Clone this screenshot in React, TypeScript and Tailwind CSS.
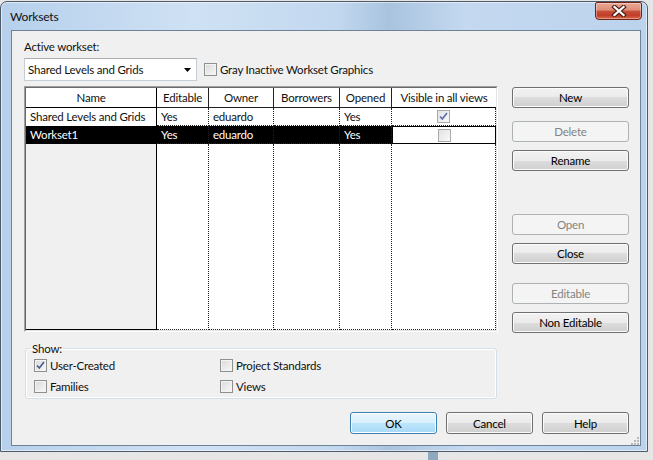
import React from "react";

// Revit-style "Worksets" dialog, Windows 7 Aero look

type BtnProps = { label: string; disabled?: boolean; primary?: boolean; wide?: boolean };

const Btn: React.FC<BtnProps> = ({ label, disabled, primary, wide }) => {
  const size = wide ? "w-[117px] h-[21px]" : "w-[87px] h-[22px]";
  let look =
    "border-[#707070] text-black bg-[linear-gradient(#f2f2f2_0%,#ebebeb_50%,#dddddd_50%,#cfcfcf_100%)] shadow-[inset_0_0_0_1px_#fbfbfb]";
  if (disabled) look = "border-[#adb2b5] text-[#838383] bg-[#f4f4f4]";
  if (primary)
    look =
      "border-[#3c7fb1] text-black bg-[linear-gradient(#eaf6fd_0%,#d9f0fc_50%,#bee6fd_50%,#a7d9f5_100%)] shadow-[inset_0_0_0_1px_#ffffff]";
  return (
    <div className={`${size} ${look} shrink-0 rounded-[3px] border flex items-center justify-center leading-[15px]`}>
      {label}
    </div>
  );
};

const Check: React.FC<{ checked?: boolean; dim?: boolean }> = ({ checked, dim }) => (
  <span
    className={`w-[13px] h-[13px] shrink-0 border flex items-center justify-center ${
      dim
        ? "border-[#a9a9a9] bg-[linear-gradient(135deg,#e2e2e2,#fafafa)]"
        : "border-[#8e8f8f] bg-[linear-gradient(135deg,#d9d9d9,#f9f9f9)] shadow-[inset_0_0_0_1px_#f4f4f4]"
    }`}
  >
    {checked && (
      <svg width="11" height="11" viewBox="0 0 11 11">
        <path d="M2 5.5 L4.3 8 L9 2" fill="none" stroke={dim ? "#5b6fa6" : "#4a5e93"} strokeWidth="1.7" />
      </svg>
    )}
  </span>
);

const cols = [
  { key: "Editable", w: "w-[52px]" },
  { key: "Owner", w: "w-[65px]" },
  { key: "Borrowers", w: "w-[66px]" },
  { key: "Opened", w: "w-[52px]" },
];

const rows = [
  { name: "Shared Levels and Grids", Editable: "Yes", Owner: "eduardo", Borrowers: "", Opened: "Yes", visible: true, sel: false },
  { name: "Workset1", Editable: "Yes", Owner: "eduardo", Borrowers: "", Opened: "Yes", visible: false, sel: true },
];

function Grid() {
  return (
    <div className="w-[474px] h-[246px] shrink-0 border border-t-[#a0a0a0] border-l-[#a0a0a0] border-r-white border-b-white">
      <div className="w-full h-full border border-t-[#696969] border-l-[#696969] border-r-[#e3e3e3] border-b-[#e3e3e3] flex">
        {/* row header column */}
        <div className="w-[131px] flex flex-col">
          <div className="h-[20px] border-b border-r border-black bg-white text-center leading-[19px]">Name</div>
          {rows.map((r) => (
            <div
              key={r.name}
              className={`h-[18px] border-r border-black pl-[4px] leading-[17px] whitespace-nowrap overflow-hidden ${
                r.sel ? "bg-black text-white" : "bg-white"
              }`}
            >
              {r.name}
            </div>
          ))}
          <div className="flex-1 border-r border-b border-black bg-[#f0f0f0]" />
        </div>
        {cols.map((c) => (
          <div key={c.key} className={`${c.w} flex flex-col`}>
            <div className="h-[20px] border-b border-r border-[#222] bg-white text-center leading-[19px]">{c.key}</div>
            {rows.map((r) => (
              <div
                key={r.name}
                className={`h-[18px] border-r border-b border-dotted border-[#222] pl-[4px] leading-[17px] whitespace-nowrap ${
                  r.sel ? "bg-black text-white" : "bg-white"
                }`}
              >
                {(r as any)[c.key]}
              </div>
            ))}
            <div className="flex-1 border-r border-b border-dotted border-[#222] bg-white" />
          </div>
        ))}
        <div className="w-[104px] flex flex-col">
          <div className="h-[20px] border-b border-black bg-white text-center leading-[19px] whitespace-nowrap">Visible in all views</div>
          {rows.map((r) => (
            <div
              key={r.name}
              className={`h-[18px] flex items-center justify-center bg-white ${
                r.sel ? "border border-black" : "border-r border-b border-dotted border-[#222]"
              }`}
            >
              <Check checked={r.visible} dim />
            </div>
          ))}
          <div className="flex-1 border-r border-b border-dotted border-[#222] bg-white" />
        </div>
      </div>
    </div>
  );
}

export default function App() {
  return (
    <div className="w-[653px] h-[460px] overflow-hidden bg-[#e6e6e6] font-['Lato','Noto_Sans',sans-serif] text-[11.5px] tracking-[-0.2px] text-[#111]">
      <div className="mt-[1px] w-[648px] h-[451px] rounded-t-[7px] border border-[#4e5a68] bg-[linear-gradient(90deg,#b6d0ec_0%,#cfe1f4_30%,#c2d8ef_52%,#a9c3df_60%,#c4d9f0_72%,#bcd3ed_100%)] shadow-[inset_0_0_0_1px_rgba(255,255,255,0.55)] flex flex-col">
        {/* title bar */}
        <div className="h-[28px] flex items-start">
          <span className="ml-[9px] mt-[7px] leading-[15px] text-[12px]">Worksets</span>
          <div className="ml-auto mr-[5px] w-[47px] h-[18px] rounded-b-[4px] rounded-t-[2px] border border-[#6e2416] bg-[linear-gradient(#e8a897_0%,#de8c77_45%,#c8503a_50%,#c13f29_78%,#dc6a4c_100%)] shadow-[inset_0_0_0_1px_rgba(255,255,255,0.35)] flex items-center justify-center">
            <svg width="16" height="12" viewBox="0 0 16 12">
              <path d="M3.5 2 L12.5 10 M12.5 2 L3.5 10" stroke="#4a2019" strokeWidth="4.4" strokeLinecap="square" />
              <path d="M3.5 2 L12.5 10 M12.5 2 L3.5 10" stroke="#ffffff" strokeWidth="2.3" strokeLinecap="square" />
            </svg>
          </div>
        </div>

        {/* client area */}
        <div className="ml-[10px] w-[630px] h-[416px] border border-[#6f8296] bg-[#f0f0f0] flex flex-col pl-[12px]">
          <div className="mt-[8px] leading-[15px]">Active workset:</div>

          <div className="mt-[4px] h-[23px] flex items-center">
            <div className="w-[173px] h-[23px] border border-[#c5cdd6] border-t-[#abadb3] bg-white flex items-center pl-[3px] pr-[5px]">
              <span className="flex-1 whitespace-nowrap">Shared Levels and Grids</span>
              <svg width="7" height="4" viewBox="0 0 7 4">
                <path d="M0 0 H7 L3.5 4 Z" fill="#000" />
              </svg>
            </div>
            <span className="ml-[7px]">
              <Check />
            </span>
            <span className="ml-[3px]">Gray Inactive Workset Graphics</span>
          </div>

          <div className="mt-[5px] flex">
            <Grid />
            <div className="ml-[14px] pt-[1px] flex flex-col">
              <Btn wide label="New" />
              <div className="mt-[13px]"><Btn wide disabled label="Delete" /></div>
              <div className="mt-[8px]"><Btn wide label="Rename" /></div>
              <div className="mt-[43px]"><Btn wide disabled label="Open" /></div>
              <div className="mt-[8px]"><Btn wide label="Close" /></div>
              <div className="mt-[19px]"><Btn wide disabled label="Editable" /></div>
              <div className="mt-[8px]"><Btn wide label="Non Editable" /></div>
            </div>
          </div>

          <fieldset className="mt-[8px] ml-[1px] w-[472px] h-[59px] rounded-[3px] border border-[#d5dfe5] shadow-[inset_0_0_0_1px_#fff] pl-[8px]">
            <legend className="ml-[-3px] px-[1px] leading-[15px]">Show:</legend>
            <div className="mt-[1px] flex flex-col gap-[4px]">
              <div className="h-[17px] flex items-center">
                <div className="w-[186px] flex items-center">
                  <Check checked />
                  <span className="ml-[3px]">User-Created</span>
                </div>
                <Check />
                <span className="ml-[3px]">Project Standards</span>
              </div>
              <div className="h-[17px] flex items-center">
                <div className="w-[186px] flex items-center">
                  <Check />
                  <span className="ml-[3px]">Families</span>
                </div>
                <Check />
                <span className="ml-[3px]">Views</span>
              </div>
            </div>
          </fieldset>

          <div className="mt-[13px] pr-[11px] flex justify-end gap-[9px]">
            <Btn primary label="OK" />
            <Btn label="Cancel" />
            <Btn label="Help" />
          </div>
          <div className="mt-[3px] pr-[1px] flex justify-end">
            <svg width="8" height="8" viewBox="0 0 8 8">
              <rect x="6" y="0" width="2" height="2" fill="#b8b8b8" />
              <rect x="3" y="3" width="2" height="2" fill="#b8b8b8" />
              <rect x="6" y="3" width="2" height="2" fill="#b8b8b8" />
              <rect x="0" y="6" width="2" height="2" fill="#b8b8b8" />
              <rect x="3" y="6" width="2" height="2" fill="#b8b8b8" />
              <rect x="6" y="6" width="2" height="2" fill="#b8b8b8" />
            </svg>
          </div>
        </div>
      </div>
      <div className="flex h-[8px]">
        <div className="ml-[428px] w-[10px] bg-[#8fa8c0]" />
      </div>
    </div>
  );
}
